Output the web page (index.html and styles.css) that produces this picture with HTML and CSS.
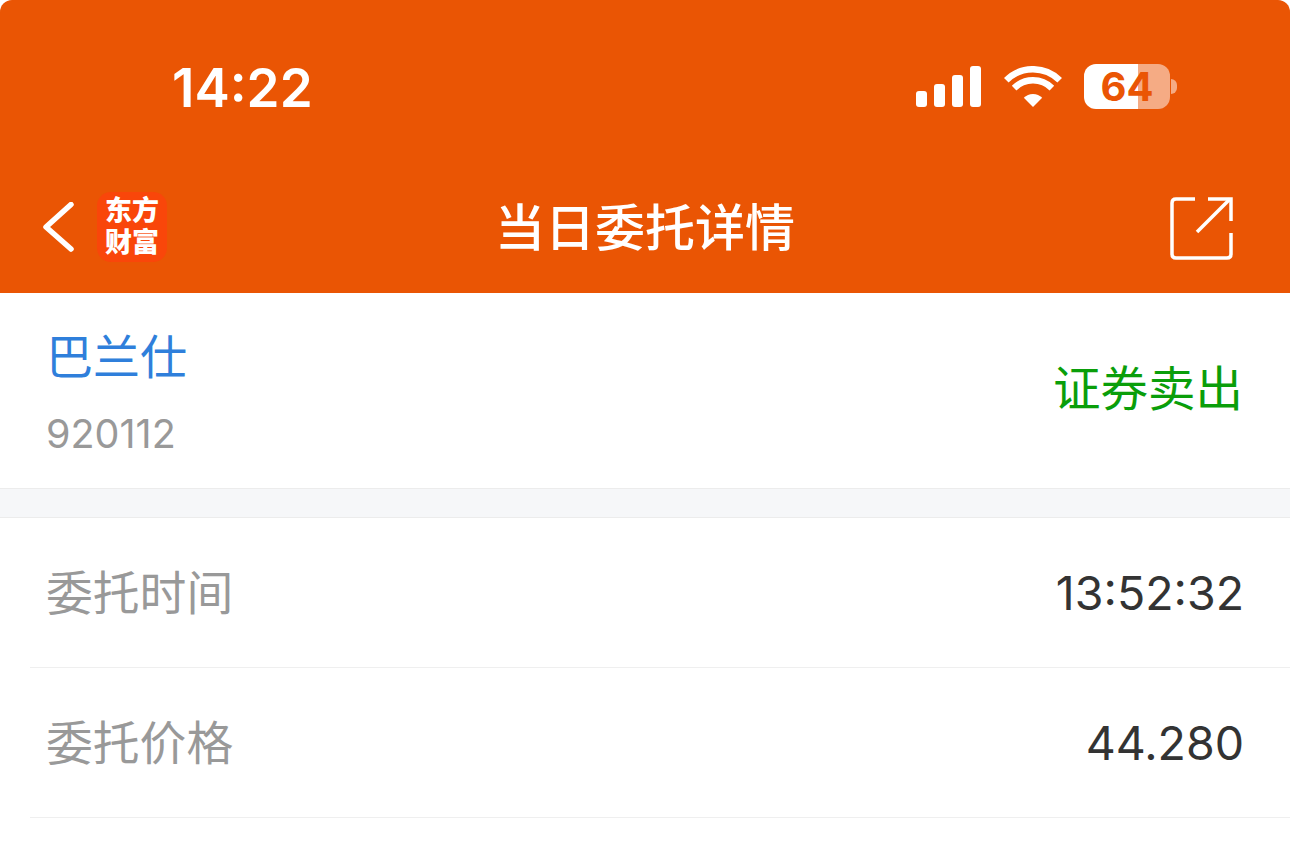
FILE: index.html
```html
<!DOCTYPE html>
<html lang="zh-CN">
<head>
  <meta charset="UTF-8" />
  <meta name="viewport" content="width=device-width, initial-scale=1" />
  <title>当日委托详情</title>
  <link rel="stylesheet" href="styles.css">
</head>
<body>

<header class="top">
  <div class="status-bar">
    <div class="time">14:22</div>
    <div class="status-icons">
      <div class="signal">
        <span class="bar bar1"></span>
        <span class="bar bar2"></span>
        <span class="bar bar3"></span>
        <span class="bar bar4"></span>
      </div>
      <svg class="wifi" width="58" height="42" viewBox="0 0 58 42">
        <path d="M2.3 14.3A37.75 37.75 0 0 1 55.7 14.3" fill="none" stroke="#fff" stroke-width="6.5" />
        <path d="M10.1 22.1A26.75 26.75 0 0 1 47.9 22.1" fill="none" stroke="#fff" stroke-width="6.5" />
        <path d="M29 41L19.8 31.8A13 13 0 0 1 38.2 31.8Z" fill="#fff" />
      </svg>
      <div class="battery">
        <div class="battery-body">64</div>
        <div class="battery-nub"></div>
      </div>
    </div>
  </div>

  <nav class="nav">
    <div class="nav-left">
      <svg class="back" width="34" height="54" viewBox="0 0 34 54">
        <path d="M29 2.5L4 25L29 47" fill="none" stroke="#fff" stroke-width="5.5" stroke-linecap="round" stroke-linejoin="round" />
      </svg>
      <div class="logo">东方<br>财富</div>
    </div>
    <h1 class="title">当日委托详情</h1>
    <svg class="share" width="64" height="64" viewBox="0 0 64 64">
      <path d="M25 2H6Q2 2 2 6V57Q2 61 6 61H57Q61 61 61 57V36" fill="none" stroke="#fff" stroke-width="3.5" />
      <path d="M38 2H61V24" fill="none" stroke="#fff" stroke-width="3.5" />
      <path d="M27 35L60 2" fill="none" stroke="#fff" stroke-width="3.5" />
    </svg>
  </nav>
</header>

<section class="stock">
  <div>
    <div class="stock-name">巴兰仕</div>
    <div class="stock-code">920112</div>
  </div>
  <div class="trade-type">证券卖出</div>
</section>

<div class="gap"></div>

<section class="details">
  <div class="row">
    <span class="label">委托时间</span>
    <span class="value">13:52:32</span>
  </div>
  <div class="row">
    <span class="label">委托价格</span>
    <span class="value">44.280</span>
  </div>
</section>

</body>
</html>
```

FILE: styles.css
```css
html, body {
  background: #fff;
}

body {
  margin: 0;
  height: 847px;
  overflow: hidden;
  font-family: Inter, "Noto Sans CJK SC", sans-serif;
}

.top {
  height: 293px;
  background: #ea5504;
  border-radius: 12px 12px 0 0;
  color: #fff;
}

.status-bar {
  height: 165px;
  display: flex;
  justify-content: space-between;
  padding: 0 113px 0 172px;
}

.time {
  font-size: 53px;
  font-weight: 600;
  line-height: 60px;
  padding-top: 58px;
}

.status-icons {
  display: flex;
  align-items: flex-start;
  padding-top: 64px;
}

.signal {
  display: flex;
  align-items: flex-end;
  gap: 7px;
  height: 41px;
  margin-top: 2px;
}

.bar {
  width: 11px;
  background: #fff;
  border-radius: 3px;
}

.bar1 { height: 16px; }
.bar2 { height: 23px; }
.bar3 { height: 32px; }
.bar4 { height: 41px; }

.wifi {
  margin: 2px 22px 0 23px;
}

.battery {
  display: flex;
  align-items: center;
  gap: 1px;
}

.battery-body {
  width: 86px;
  height: 45px;
  border-radius: 12px;
  background: linear-gradient(to right, #fff 54px, #f5ab84 54px);
  color: #ea5504;
  font-size: 40px;
  font-weight: 700;
  line-height: 45px;
  text-align: center;
}

.battery-nub {
  width: 6px;
  height: 15px;
  background: #f5ab84;
  border-radius: 0 6px 6px 0;
}

.nav {
  height: 128px;
  display: flex;
  justify-content: space-between;
  align-items: center;
  padding: 0 56px 0 42px;
  position: relative;
}

.nav-left {
  display: flex;
  align-items: center;
  gap: 21px;
}

.logo {
  width: 70px;
  height: 70px;
  margin-bottom: 4px;
  background: #f9460a;
  border-radius: 14px;
  font-size: 27px;
  font-weight: 900;
  line-height: 32px;
  text-align: center;
  padding-top: 3px;
  box-sizing: border-box;
}

.title {
  margin: 0 0 2px;
  position: absolute;
  left: 0;
  right: 0;
  text-align: center;
  font-size: 50px;
  font-weight: 500;
  line-height: 60px;
}

.share {
  position: relative;
}

.stock {
  height: 195px;
  display: flex;
  justify-content: space-between;
  align-items: center;
  padding: 0 47px 0 46px;
}

.stock-name {
  color: #2f7fdb;
  font-size: 47px;
  line-height: 56px;
  margin-top: 4px;
}

.stock-code {
  color: #999;
  font-size: 39.5px;
  line-height: 46px;
  margin-top: 26px;
}

.trade-type {
  color: #0a9e0a;
  font-size: 47.5px;
  line-height: 56px;
  margin-bottom: 3px;
}

.gap {
  height: 28px;
  background: #f6f7f9;
  border-top: 1px solid #ececec;
  border-bottom: 1px solid #ececec;
}

.details {
  margin-left: 30px;
}

.row {
  height: 149px;
  display: flex;
  justify-content: space-between;
  align-items: center;
  padding: 0 46px 0 16px;
  border-bottom: 1px solid #efefef;
}

.label {
  color: #999;
  font-size: 46.8px;
  margin-bottom: 6px;
}

.value {
  color: #333;
  font-size: 46.5px;
}
```
